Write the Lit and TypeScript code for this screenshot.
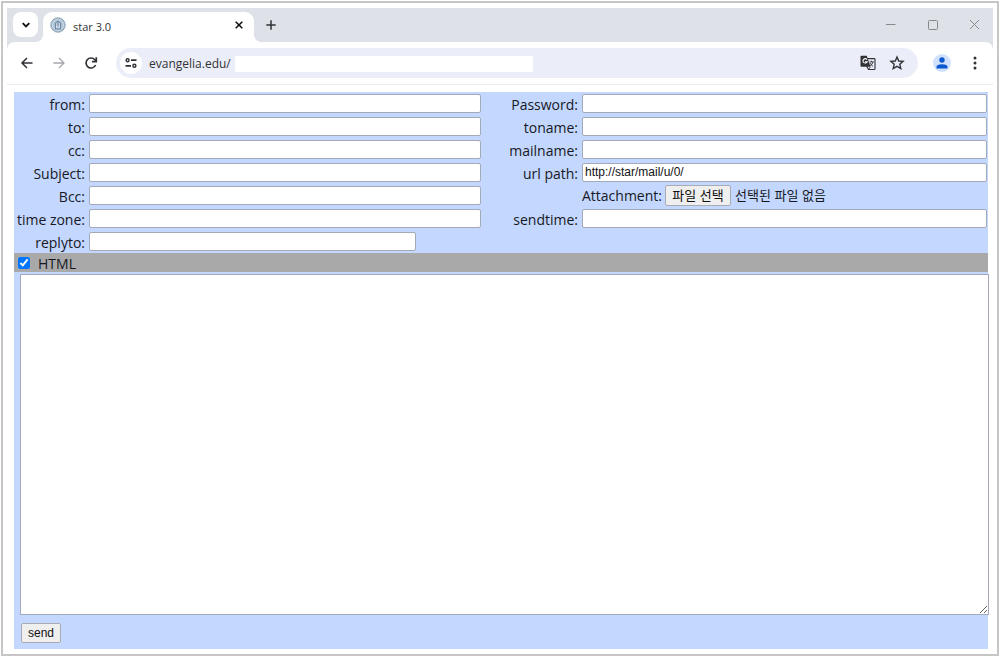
import { LitElement, html, css } from "lit";
import { customElement, query, state } from "lit/decorators.js";

@customElement("browser-bar")
class BrowserBar extends LitElement {
  static styles = css`
    :host {
      display: block;
      font-family: "Open Sans", "Noto Sans", sans-serif;
      color: #303236;
    }
    button {
      display: flex;
      align-items: center;
      justify-content: center;
      padding: 0;
      border: 0;
      background: none;
      color: inherit;
    }
    svg {
      display: block;
      fill: none;
      stroke: currentColor;
      stroke-width: 1.7;
    }
    .tabs {
      display: flex;
      height: 34px;
      padding-left: 6px;
      background: #dee1e7;
    }
    .search {
      width: 25px;
      height: 25px;
      margin-top: 4px;
      border-radius: 8px;
      background: #fff;
      color: #111;
    }
    .tab {
      position: relative;
      display: flex;
      align-items: center;
      box-sizing: border-box;
      width: 211px;
      height: 30px;
      margin: 4px 0 0 5px;
      padding: 0 9px 5px 7px;
      border-radius: 9px 9px 0 0;
      background: #fff;
      font-size: 11px;
    }
    .tab::before,
    .tab::after {
      content: "";
      position: absolute;
      bottom: 0;
      width: 8px;
      height: 8px;
    }
    .tab::before {
      left: -8px;
      background: radial-gradient(circle at 0 0, transparent 8px, #fff 8px);
    }
    .tab::after {
      right: -8px;
      background: radial-gradient(circle at 100% 0, transparent 8px, #fff 8px);
    }
    .title {
      flex: 1;
      padding: 3px 0 0 7px;
    }
    .close {
      color: #111;
    }
    .new {
      width: 34px;
      height: 33px;
    }
    .window {
      display: flex;
      margin-left: auto;
      margin-right: -2px;
      color: #85888d;
    }
    .window button {
      width: 42px;
      height: 33px;
    }
    .window svg {
      stroke-width: 1;
    }
    .under {
      background: #dee1e7;
    }
    .tools {
      display: flex;
      align-items: center;
      height: 42px;
      padding: 0 9px 0 4px;
      border-bottom: 1px solid #ececef;
      border-radius: 8px 8px 0 0;
      background: #fff;
    }
    .nav {
      width: 32px;
      height: 32px;
    }
    .off {
      color: #a5a7aa;
    }
    .address {
      display: flex;
      flex: 1;
      align-items: center;
      height: 30px;
      margin-left: 9px;
      padding: 0 7px 0 4px;
      border-radius: 15px;
      background: #ebeef8;
    }
    .site {
      width: 22px;
      height: 22px;
      border-radius: 11px;
      background: #fff;
    }
    .url {
      padding-left: 7px;
      font-size: 12px;
    }
    .blank {
      width: 298px;
      height: 16px;
      margin: 2px auto 0 4px;
      background: #fff;
    }
    .small {
      width: 29px;
      height: 30px;
    }
    .profile {
      width: 18px;
      height: 18px;
      margin: 0 15px;
      border-radius: 9px;
      background: #d0e1fd;
    }
    .menu {
      width: 18px;
      height: 30px;
    }
  `;

  render() {
    return html`
      <div class="tabs">
        <button class="search" aria-label="Search tabs">
          <svg width="10" height="10" viewBox="0 0 10 10"><path d="M1.7 3.2 5 6.5l3.3-3.3" stroke-width="1.8" /></svg>
        </button>
        <div class="tab">
          <svg width="16" height="16" viewBox="0 0 16 16">
            <circle cx="8" cy="8" r="7.2" fill="#adc0d1" stroke="#8ba3b8" stroke-width="1" />
            <circle cx="8" cy="8" r="5.4" fill="#a9bfd2" stroke="#dbe5ed" stroke-width=".8" />
            <path d="M5.5 12V6l2.5-2 2.5 2v6M8 5v3M4.8 12h6.4M5.5 8h5" stroke="#5f7c98" stroke-width=".8" />
            <path d="M6.7 6.5V11M9.3 6.5V11" stroke="#edf3f8" stroke-width=".8" />
          </svg>
          <span class="title">star 3.0</span>
          <button class="close" aria-label="Close tab">
            <svg width="12" height="12" viewBox="0 0 12 12"><path d="m2.7 2.7 6.6 6.6M9.3 2.7 2.7 9.3" stroke-width="1.6" /></svg>
          </button>
        </div>
        <button class="new" aria-label="New tab">
          <svg width="12" height="12" viewBox="0 0 12 12"><path d="M6 1.3v9.4M1.3 6h9.4" stroke-width="1.5" /></svg>
        </button>
        <div class="window">
          <button aria-label="Minimize"><svg width="11" height="11" viewBox="0 0 11 11"><path d="M1 5.5h9.5" /></svg></button>
          <button aria-label="Maximize"><svg width="11" height="11" viewBox="0 0 11 11"><rect x="1.5" y="1.5" width="9" height="9" rx="1" /></svg></button>
          <button aria-label="Close"><svg width="11" height="11" viewBox="0 0 11 11"><path d="m1 1 9 9M10 1l-9 9" /></svg></button>
        </div>
      </div>
      <div class="under">
        <div class="tools">
          <button class="nav" aria-label="Back">
            <svg width="14" height="14" viewBox="0 0 14 14"><path d="M12.5 7H2.2M7 2 2 7l5 5" stroke-width="1.5" /></svg>
          </button>
          <button class="nav off" aria-label="Forward">
            <svg width="14" height="14" viewBox="0 0 14 14"><path d="M1.5 7h10.3M7 2l5 5-5 5" stroke-width="1.3" /></svg>
          </button>
          <button class="nav" aria-label="Reload">
            <svg width="14" height="14" viewBox="0 0 14 14">
              <path d="M11.6 9A5 5 0 1 1 10.8 3.7l1.4 1.5" />
              <path d="M12.3 1.3v4.4H8" />
            </svg>
          </button>
          <div class="address">
            <button class="site" aria-label="Site information">
              <svg width="12" height="12" viewBox="0 0 12 12">
                <circle cx="2.6" cy="3.2" r="1.5" stroke-width="1.4" />
                <circle cx="9.4" cy="8.8" r="1.5" stroke-width="1.4" />
                <path d="M6 3.2h5.5M.5 8.8H6" />
              </svg>
            </button>
            <span class="url">evangelia.edu/</span>
            <span class="blank"></span>
            <button class="small" aria-label="Translate">
              <svg width="16" height="16" viewBox="0 0 16 16">
                <path d="M6 3.6h8.2q.8 0 .8.8v9.3q0 .8-.8.8H8.5L6.5 11" stroke-width="1.1" />
                <path d="M1.3.8h5.5l3.7 10.9H1.3Q.5 11.7.5 10.9V1.6Q.5.8 1.3.8Z" fill="currentColor" stroke="none" />
                <path d="M7 4.6A2.2 2.2 0 1 0 7.2 6.7H5" stroke="#fff" stroke-width="1.1" />
                <path d="M9.5 6.9h4.3M11.5 5.7v1.2M13 7q-.6 2.2-2.7 3.9M10 8q1 2 3 3.4M8.5 14.3l2-2.5" stroke-width=".9" />
              </svg>
            </button>
            <button class="small" aria-label="Bookmark">
              <svg width="16" height="16" viewBox="0 0 16 16">
                <path d="m8 2 1.7 4 4.4.4-3.3 2.9 1 4.2L8 11.300l-3.800 2.200 1-4.200-3.300-2.900L6.300 6Z" stroke-width="1.4" />
              </svg>
            </button>
          </div>
          <button class="profile" aria-label="Profile">
            <svg width="12" height="12" viewBox="0 0 12 12">
              <g fill="#0b57d0" stroke="none"><circle cx="6" cy="3" r="2.7" /><path d="M.5 11.500V10Q.5 7.200 6 7.200T11.500 10v1.500Z" /></g>
            </svg>
          </button>
          <button class="menu" aria-label="Menu">
            <svg width="4" height="14" viewBox="0 0 4 14">
              <g fill="currentColor" stroke="none"><circle cx="2" cy="2" r="1.5" /><circle cx="2" cy="7" r="1.5" /><circle cx="2" cy="12" r="1.5" /></g>
            </svg>
          </button>
        </div>
      </div>
    `;
  }
}

interface Field {
  id: string;
  label: string;
  value?: string;
  type?: string;
}

const rows: [Field, Field | "file" | null][] = [
  [{ id: "from", label: "from:" }, { id: "password", label: "Password:", type: "password" }],
  [{ id: "to", label: "to:" }, { id: "toname", label: "toname:" }],
  [{ id: "cc", label: "cc:" }, { id: "mailname", label: "mailname:" }],
  [{ id: "subject", label: "Subject:" }, { id: "urlpath", label: "url path:", value: "http://star/mail/u/0/" }],
  [{ id: "bcc", label: "Bcc:" }, "file"],
  [{ id: "timezone", label: "time zone:" }, { id: "sendtime", label: "sendtime:" }],
  [{ id: "replyto", label: "replyto:" }, null],
];

@customElement("mail-form")
class MailForm extends LitElement {
  static styles = css`
    :host {
      display: flex;
      flex-direction: column;
      background: #c3d7ff;
      color: #17191f;
      font-family: "Open Sans", "Noto Sans", "Noto Sans CJK KR", sans-serif;
      font-size: 14px;
    }
    form {
      display: flex;
      flex: 1;
      flex-direction: column;
    }
    .fields {
      display: grid;
      grid-template-columns: 71px 392fr 93px 405fr;
      grid-auto-rows: 23px;
      column-gap: 4px;
      align-items: center;
      padding-right: 1px;
    }
    .label {
      text-align: right;
      white-space: nowrap;
      line-height: 20px;
      padding-top: 2px;
    }
    .text,
    .body {
      box-sizing: border-box;
      border: 1px solid #a3a9b6;
      border-radius: 2px;
      background: #fff;
      color: #111;
      font: 12px "Liberation Sans", sans-serif;
    }
    .text {
      width: 100%;
      min-width: 0;
      height: 19px;
      padding: 0 2px 2px;
    }
    #replyto {
      width: 83.5%;
    }
    .attach {
      display: flex;
      grid-column: 3 / 5;
      align-items: center;
      padding-left: 97px;
      white-space: nowrap;
    }
    .attach label {
      padding-right: 3px;
    }
    .push {
      box-sizing: border-box;
      border: 1px solid #a9abb2;
      border-radius: 2px;
      background: #efefef;
      color: #111;
      font: 12px "Liberation Sans", "Noto Sans CJK KR", sans-serif;
    }
    .pick {
      height: 21px;
      width: 66px;
      padding: 0;
      font-size: 13px;
      line-height: 19px;
    }
    .name {
      padding-left: 4px;
      font: 13px/19px "Liberation Sans", "Noto Sans CJK KR", sans-serif;
    }
    .mode {
      display: flex;
      align-items: center;
      height: 19px;
      background: #a9a9a9;
    }
    .mode input {
      width: 12px;
      height: 12px;
      margin: 0 8px 0 4px;
      accent-color: #0075ff;
    }
    .mode label {
      padding-top: 2px;
      line-height: 19px;
    }
    .body {
      flex: 1;
      margin: 2px -1px 0 6px;
      border-radius: 0;
      resize: both;
    }
    .send {
      align-self: flex-start;
      height: 20px;
      margin: 8px 0 6px 7px;
      padding: 0 6px;
    }
  `;

  @query("#attachment") picker!: HTMLInputElement;
  @state() fileName = "선택된 파일 없음";

  onPicked() {
    this.fileName = this.picker.files?.[0]?.name ?? "선택된 파일 없음";
  }

  field(f: Field) {
    return html`
      <label class="label" for=${f.id}>${f.label}</label>
      <input class="text" id=${f.id} type=${f.type ?? "text"} .value=${f.value ?? ""} autocomplete="off" />
    `;
  }

  fileField() {
    return html`
      <div class="attach">
        <label for="attachment">Attachment:</label>
        <input id="attachment" type="file" hidden @change=${this.onPicked} />
        <button class="push pick" type="button" @click=${() => this.picker.click()}>파일 선택</button>
        <span class="name">${this.fileName}</span>
      </div>
    `;
  }

  render() {
    return html`
      <form @submit=${(e: Event) => e.preventDefault()}>
        <div class="fields">
          ${rows.map(([a, b]) => [this.field(a), b === "file" ? this.fileField() : b ? this.field(b) : null])}
        </div>
        <div class="mode">
          <input id="html" type="checkbox" checked />
          <label for="html">HTML</label>
        </div>
        <textarea class="body" aria-label="Message"></textarea>
        <button class="push send">send</button>
      </form>
    `;
  }
}

@customElement("app-root")
class AppRoot extends LitElement {
  static styles = css`
    :host {
      display: flex;
      box-sizing: border-box;
      height: 100vh;
      padding: 1px;
      background: #fff;
    }
    .frame {
      display: flex;
      flex: 1;
      flex-direction: column;
      min-width: 0;
      padding: 5px 4px;
      border: 2px solid #c6c6c6;
    }
    mail-form {
      flex: 1;
      margin: 7px 5px 0 7px;
    }
  `;

  render() {
    return html`
      <div class="frame">
        <browser-bar></browser-bar>
        <mail-form></mail-form>
      </div>
    `;
  }
}
